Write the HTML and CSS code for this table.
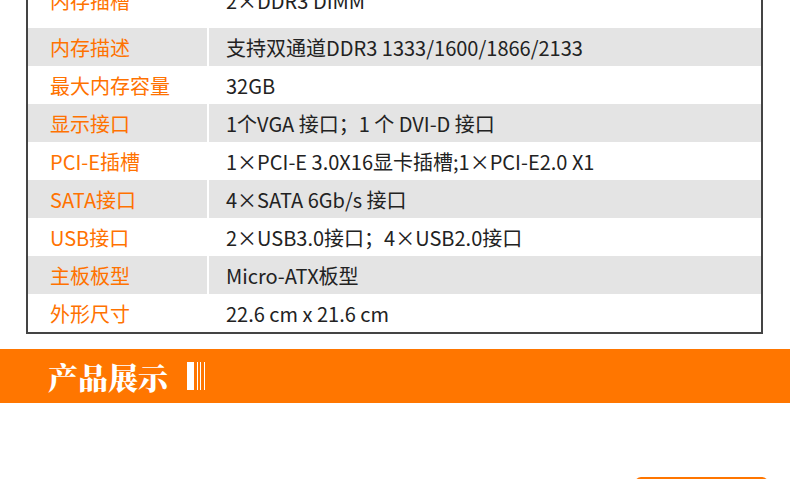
FILE: index.html
```html
<!DOCTYPE html>
<html lang="zh-CN">
<head>
    <meta charset="UTF-8">
    <meta name="viewport" content="width=device-width, initial-scale=1.0">
    <title>产品参数</title>
    <link rel="stylesheet" href="styles.css">
</head>
<body>
    <table class="spec">
        <tr class="first">
            <td class="label">内存插槽</td>
            <td class="value">2×DDR3 DIMM</td>
        </tr>
        <tr class="shade">
            <td class="label">内存描述</td>
            <td class="value">支持双通道DDR3 1333/1600/1866/2133</td>
        </tr>
        <tr>
            <td class="label">最大内存容量</td>
            <td class="value">32GB</td>
        </tr>
        <tr class="shade">
            <td class="label">显示接口</td>
            <td class="value">1个VGA 接口；1 个 DVI-D 接口</td>
        </tr>
        <tr>
            <td class="label">PCI-E插槽</td>
            <td class="value">1×PCI-E 3.0X16显卡插槽;1×PCI-E2.0 X1</td>
        </tr>
        <tr class="shade">
            <td class="label">SATA接口</td>
            <td class="value">4×SATA 6Gb/s 接口</td>
        </tr>
        <tr>
            <td class="label">USB接口</td>
            <td class="value">2×USB3.0接口；4×USB2.0接口</td>
        </tr>
        <tr class="shade">
            <td class="label">主板板型</td>
            <td class="value">Micro-ATX板型</td>
        </tr>
        <tr>
            <td class="label">外形尺寸</td>
            <td class="value">22.6 cm x 21.6 cm</td>
        </tr>
    </table>

    <div class="band">
        <h2>产品展示</h2>
        <svg class="mark" width="20" height="28" viewBox="0 0 20 28">
            <rect x="0" y="0" width="7" height="28" fill="#fff"/>
            <rect x="10" y="0" width="1" height="28" fill="#fff"/>
            <rect x="13" y="0" width="1" height="28" fill="#fff"/>
            <rect x="17" y="0" width="1" height="28" fill="#fff"/>
        </svg>
    </div>

    <div class="more">
        <span class="tab"></span>
    </div>
</body>
</html>
```

FILE: styles.css
```css
body {
    margin: 0;
    background: #fff;
    font-family: "Noto Sans CJK SC", sans-serif;
    overflow: hidden;
}

.spec {
    width: 737px;
    margin: -30px 0 0 26px;
    border: 2px solid #444;
    border-collapse: separate;
    border-spacing: 0;
    font-size: 20px;
}

.spec td {
    height: 38px;
    padding: 0;
    vertical-align: middle;
    white-space: nowrap;
}

.spec .first td {
    height: 56px;
}

.spec .label {
    width: 157px;
    padding-left: 22px;
    color: #ff7200;
}

.spec .value {
    padding-left: 17px;
    border-left: 2px solid #fff;
    color: #222;
}

.spec .shade td {
    background: #e4e4e4;
}

.band {
    display: flex;
    align-items: center;
    height: 54px;
    margin-top: 15px;
    padding-left: 48px;
    background: #ff7600;
}

.band h2 {
    margin: 0 19px 0 0;
    color: #fff;
    font-family: "Noto Serif CJK SC", "Noto Sans CJK SC", serif;
    font-size: 30px;
    font-weight: 900;
    line-height: 1;
}

.mark {
    display: block;
}

.more {
    display: flex;
    justify-content: flex-end;
    padding: 74px 22px 0 0;
}

.tab {
    display: block;
    width: 133px;
    height: 30px;
    background: #ff7600;
    border-radius: 6px;
}
```
